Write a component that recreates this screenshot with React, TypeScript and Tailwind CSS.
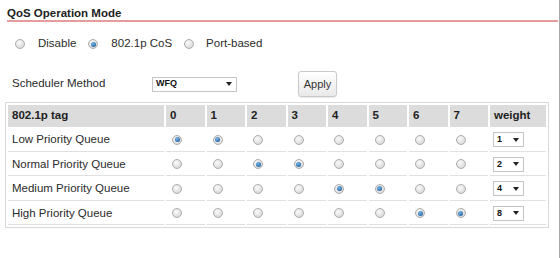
import React from 'react';

const tags = [0, 1, 2, 3, 4, 5, 6, 7];

const queues = [
  { name: 'Low Priority Queue', on: [0, 1], weight: '1' },
  { name: 'Normal Priority Queue', on: [2, 3], weight: '2' },
  { name: 'Medium Priority Queue', on: [4, 5], weight: '4' },
  { name: 'High Priority Queue', on: [6, 7], weight: '8' },
];

function Radio({ checked }: { checked?: boolean }) {
  return (
    <span className="inline-flex w-[10px] h-[10px] rounded-full border border-[#adadad] bg-[radial-gradient(circle_at_40%_35%,#fbfbfb,#cfcfcf)] items-center justify-center shrink-0">
      {checked && (
        <span className="block w-[5px] h-[5px] rounded-full bg-[radial-gradient(circle_at_40%_35%,#7ab8ea,#0b4a8c)]" />
      )}
    </span>
  );
}

function MiniSelect({ value, className }: { value: string; className: string }) {
  return (
    <div className={`flex items-center justify-between bg-white border border-[#c4c4c4] text-[9px] font-bold text-[#111] pl-[3px] pr-[4px] ${className}`}>
      <span>{value}</span>
      <svg width="6" height="4" viewBox="0 0 6 4">
        <path d="M0 0h6L3 4z" fill="#222" />
      </svg>
    </div>
  );
}

export default function App() {
  return (
    <div className="w-[560px] h-[258px] bg-white border-r border-[#a9a9a9] font-['Liberation_Sans',Arial,sans-serif] text-[11.5px] text-[#2b2b2b] overflow-hidden">
      <div className="pt-[6px] pl-[7px] pr-[1px]">
        <div className="h-[16px] leading-[15px] font-bold text-[#222] border-b-2 border-[#e59c9c]">
          QoS Operation Mode
        </div>
      </div>

      <div className="mt-[12px] h-[20px] pl-[15px] flex items-center">
        <Radio />
        <span className="ml-[13px]">Disable</span>
        <span className="ml-[12px] flex"><Radio checked /></span>
        <span className="ml-[13px]">802.1p CoS</span>
        <span className="ml-[12px] flex"><Radio /></span>
        <span className="ml-[12px]">Port-based</span>
      </div>

      <div className="mt-[17px] h-[26px] flex items-center">
        <span className="ml-[12px] w-[140px]">Scheduler Method</span>
        <MiniSelect value="WFQ" className="w-[85px] h-[15px]" />
        <button className="ml-[61px] w-[39px] h-[26px] rounded-[3px] border border-[#c9c9c9] bg-gradient-to-b from-white to-[#e9e9e9] text-[11px] text-[#333] shadow-[0_1px_1px_rgba(0,0,0,0.08)]">
          Apply
        </button>
      </div>

      <table className="mt-[5px] ml-[5px] w-[544px] table-fixed border-separate border-spacing-[2px] border border-[#d9d9d9]">
        <colgroup>
          <col className="w-[156px]" />
          {tags.map((t) => (
            <col key={t} className="w-[38.5px]" />
          ))}
          <col className="w-[56px]" />
        </colgroup>
        <thead>
          <tr>
            <th className="h-[22px] bg-[#dcdcdc] text-left font-bold text-[#222] pl-[4px] p-0">802.1p tag</th>
            {tags.map((t) => (
              <th key={t} className="h-[22px] bg-[#dcdcdc] text-left font-bold text-[#222] pl-[4px] p-0">{t}</th>
            ))}
            <th className="h-[22px] bg-[#dcdcdc] text-left font-bold text-[#222] pl-[4px] p-0">weight</th>
          </tr>
        </thead>
        <tbody>
          {queues.map((q) => (
            <tr key={q.name}>
              <td className="h-[22.5px] border-b border-[#e0e0e0] pl-[4px] p-0">{q.name}</td>
              {tags.map((t) => (
                <td key={t} className="h-[22.5px] border-b border-[#e0e0e0] p-0">
                  <span className="flex pl-[6px]">
                    <Radio checked={q.on.includes(t)} />
                  </span>
                </td>
              ))}
              <td className="h-[22.5px] border-b border-[#e0e0e0] p-0">
                <MiniSelect value={q.weight} className="ml-[3px] w-[31px] h-[15px]" />
              </td>
            </tr>
          ))}
        </tbody>
      </table>
    </div>
  );
}
